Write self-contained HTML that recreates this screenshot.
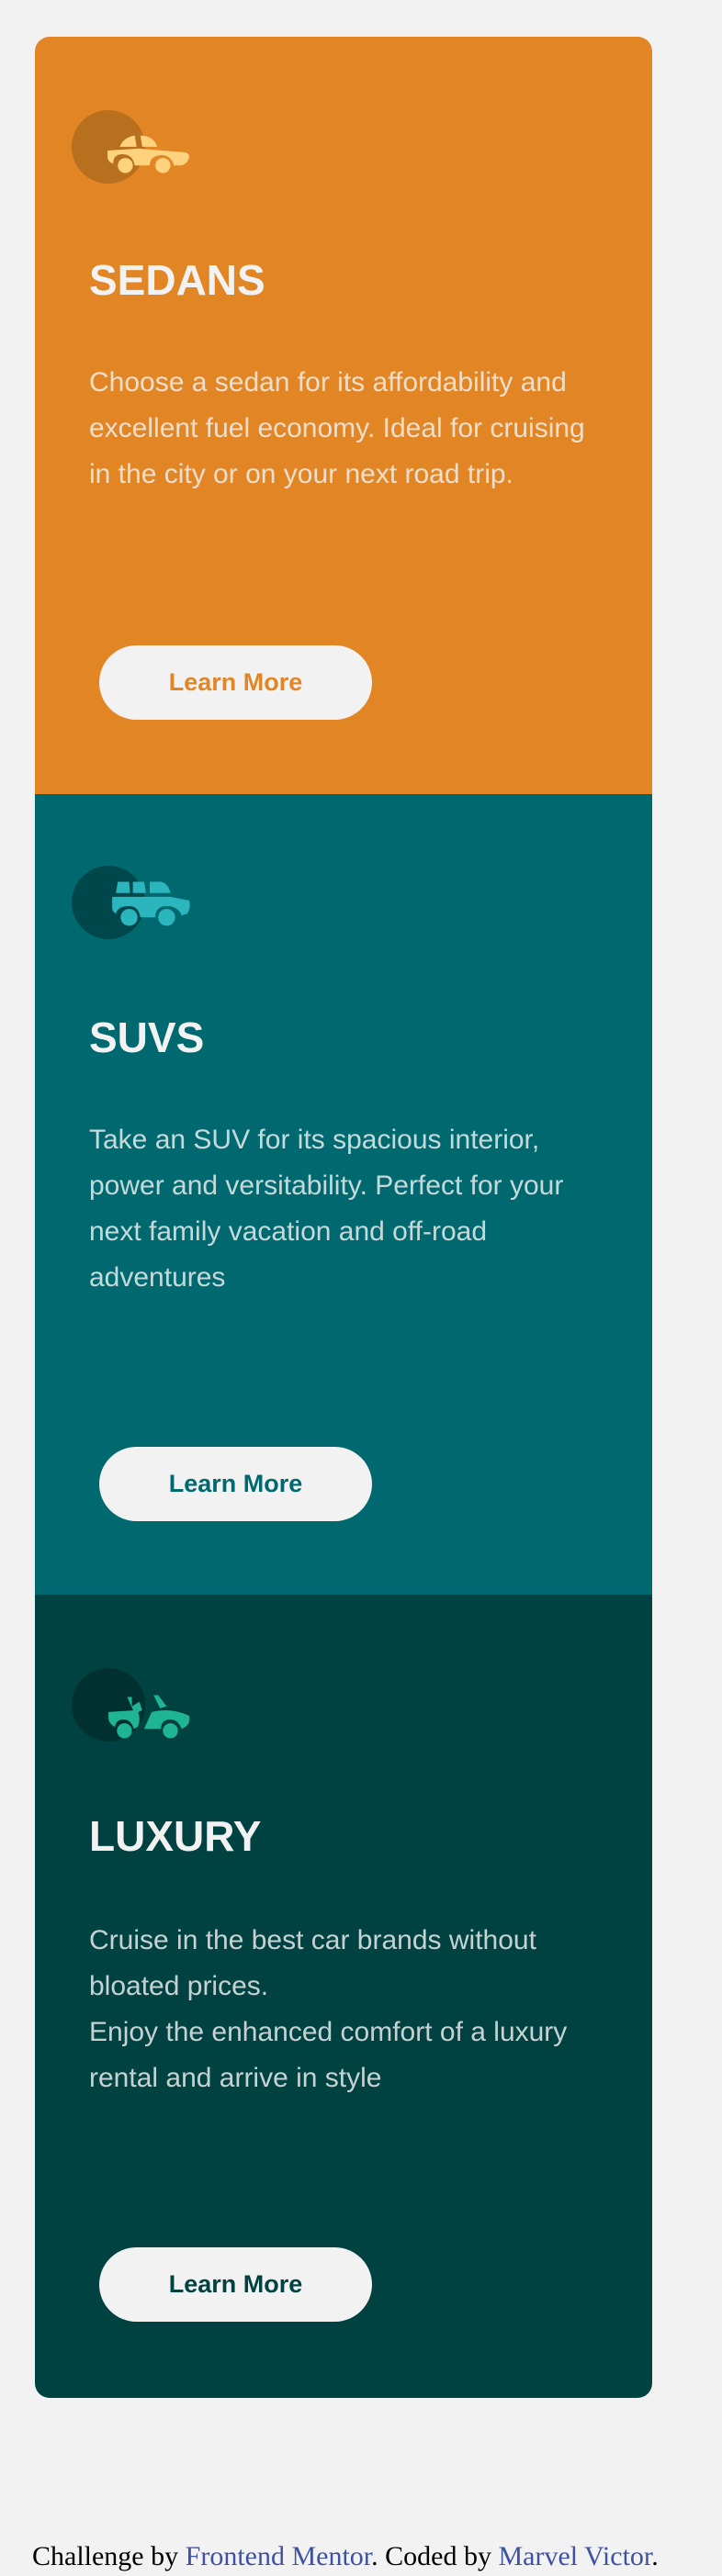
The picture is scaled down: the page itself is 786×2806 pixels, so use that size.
<!DOCTYPE html>
<html><head><meta charset="utf-8">
<style>
html,body{margin:0;padding:0;background:#f2f2f2;}
body{width:786px;height:2806px;position:relative;overflow:hidden;font-family:"Liberation Sans",Arial,sans-serif;}
.card{position:absolute;left:38px;top:40px;width:672px;border-radius:16px;overflow:hidden;}
.sec{position:relative;}
.circ{position:absolute;left:40px;top:80px;width:80px;height:80px;border-radius:50%;}
.car{position:absolute;left:78px;top:98px;width:92px;height:56px;}
h2{position:absolute;left:59px;margin:0;color:#f2f2f2;font-size:46px;font-weight:bold;letter-spacing:0;font-family:"Liberation Sans",sans-serif;}
p{position:absolute;left:59px;top:352px;width:560px;margin:0;color:rgba(242,242,242,0.82);font-size:30px;line-height:50px;}
.btn{position:absolute;left:70px;width:297px;height:81px;border-radius:41px;background:#f2f2f2;text-align:center;line-height:81px;font-weight:bold;font-size:27px;}
.foot{position:absolute;left:35px;top:2768px;font-family:"Liberation Serif",serif;font-size:30px;color:#000;white-space:nowrap;}
.foot a{color:#3e52a3;text-decoration:none;}
</style></head><body>
<div class="card">
  <div class="sec" style="height:825px;background:#e28625;">
    <div class="circ" style="background:#b86f1e;"></div>
    <svg class="car" viewBox="0 0 90 52"><g fill="#ffd27d">
      <path d="M14 20 Q18 10 30 8 L32 20 Z"/><path d="M36 8 Q50 8 54 20 L38 20 Z"/>
      <path d="M1 24 L34 22 L84 26 Q90 28 87 34 Q84 40 78 40 L72 40 Q68 28 57 29 Q46 30 46 40 L30 40 Q28 28 17 28 Q7 28 7 38 Q1 36 1 30 Z"/>
      <circle cx="20" cy="40" r="8"/><circle cx="60" cy="40" r="8"/></g></svg>
    <h2 style="top:238px;">SEDANS</h2>
    <p>Choose a sedan for its affordability and excellent fuel economy. Ideal for cruising in the city or on your next road trip.</p>
    <div class="btn" style="top:663px;color:#e28625;">Learn More</div>
  </div>
  <div class="sec" style="height:872px;background:#006970;">
    <div class="circ" style="background:#00474c;top:78px;"></div>
    <svg class="car" viewBox="0 0 90 52" style="top:92px;"><g fill="#2bb5bd">
      <path d="M12 2 L24 2 L25 14 L10 14 Z"/><path d="M28 2 L40 2 L42 14 L28 14 Z"/><path d="M46 2 L58 2 Q66 4 68 14 L46 14 Z"/>
      <path d="M6 18 L68 18 L88 22 Q90 30 86 36 L80 38 Q76 28 64 28 Q52 28 52 40 L36 40 Q34 28 24 28 Q12 28 10 36 Q6 34 6 30 Z"/>
      <circle cx="24" cy="40" r="9"/><circle cx="64" cy="40" r="9"/></g></svg>
    <h2 style="top:238px;">SUVS</h2>
    <p>Take an SUV for its spacious interior, power and versitability. Perfect for your next family vacation and off-road adventures</p>
    <div class="btn" style="top:711px;color:#006970;">Learn More</div>
  </div>
  <div class="sec" style="height:875px;background:#004241;">
    <div class="circ" style="background:#003130;"></div>
    <svg class="car" viewBox="0 0 90 52" style="top:106px;"><g fill="#1fb493">
      <path d="M22 4 L27 4 L27 14 L35 9 L38 18 L30 22 Z"/><path d="M50 2 L55 2 L64 14 L57 16 Z"/>
      <path d="M2 20 L33 18 Q37 28 33 36 L29 38 Q26 28 18 28 Q10 28 9 36 Q2 32 2 26 Z"/>
      <path d="M40 38 L48 20 Q68 15 88 24 Q90 34 80 38 Q76 28 68 28 Q58 28 58 38 Z"/>
      <circle cx="19" cy="40" r="8"/><circle cx="68" cy="40" r="8"/></g></svg>
    <h2 style="top:236px;">LUXURY</h2>
    <p>Cruise in the best car brands without bloated prices.<br>Enjoy the enhanced comfort of a luxury rental and arrive in style</p>
    <div class="btn" style="top:711px;color:#004241;">Learn More</div>
  </div>
</div>
<div class="foot">Challenge by <a>Frontend Mentor</a>. Coded by <a>Marvel Victor</a>.</div>
</body></html>
